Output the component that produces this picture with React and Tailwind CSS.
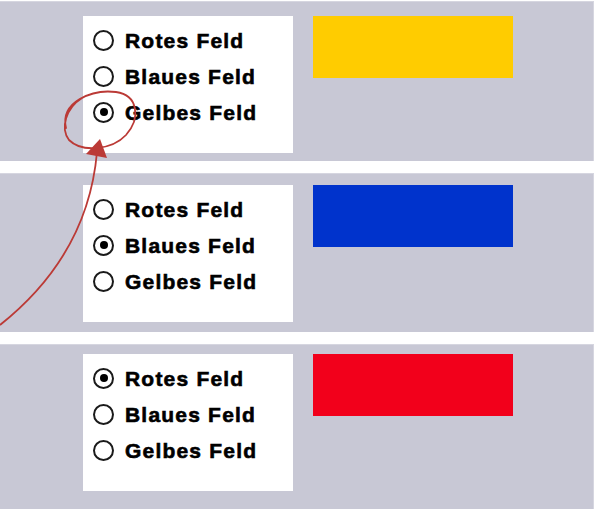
import React, { useState } from "react";

const options = ["Rotes Feld", "Blaues Feld", "Gelbes Feld"];
const colors = ["bg-[#f2001b]", "bg-[#0033cc]", "bg-[#ffcc00]"];

const Radio = ({ checked }) => (
  <span className="flex h-[21px] w-[21px] items-center justify-center rounded-full border-2 border-[#1a1a1a] bg-white">
    {checked && <span className="h-[8px] w-[8px] rounded-full bg-black" />}
  </span>
);

const Panel = ({ initial, className, boxTop }) => {
  const [value, setValue] = useState(initial);

  return (
    <div className={`flex w-[594px] border-t border-r border-[#d6d6e0] bg-[#c8c8d5] pl-[83px] ${className}`}>
      <div className={`flex items-start ${boxTop}`}>
        <div className="h-[137px] w-[210px] bg-white pl-[10px] pt-[6px]">
          {options.map((label, i) => (
            <label
              key={label}
              className="flex h-[36px] cursor-pointer items-center gap-[11px]"
              onClick={() => setValue(i)}
            >
              <Radio checked={value === i} />
              <span className="font-['Liberation_Sans',Arial,sans-serif] text-[21px] font-bold leading-none tracking-[1.2px] text-black [-webkit-text-stroke:0.6px_black]">
                {label}
              </span>
            </label>
          ))}
        </div>
        <div className={`ml-[20px] h-[62px] w-[200px] ${colors[value]}`} />
      </div>
    </div>
  );
};

export default function App() {
  return (
    <div className="relative h-[509px] w-[596px] overflow-hidden bg-white pt-[1px]">
      <div className="flex flex-col gap-[12px]">
        <Panel initial={2} className="h-[160px]" boxTop="pt-[14px]" />
        <Panel initial={1} className="h-[159px]" boxTop="pt-[11px]" />
        <Panel initial={0} className="h-[165px]" boxTop="pt-[9px]" />
      </div>

      {/* hand-drawn annotation */}
      <svg
        className="pointer-events-none absolute left-0 top-0"
        width="596"
        height="509"
        viewBox="0 0 596 509"
        fill="none"
      >
        <path
          d="M66 128 C60 102, 92 89, 116 92 C138 95, 141 118, 126 135 C112 150, 82 153, 69 140 C60 128, 66 108, 82 98"
          stroke="#bb3a36"
          strokeWidth="1.8"
          strokeLinecap="round"
        />
        <path d="M0 325 Q 88 255 97 152" stroke="#bb3a36" strokeWidth="1.8" />
        <polygon points="100,139 86,154 107,158" fill="#bb3a36" />
      </svg>
    </div>
  );
}
